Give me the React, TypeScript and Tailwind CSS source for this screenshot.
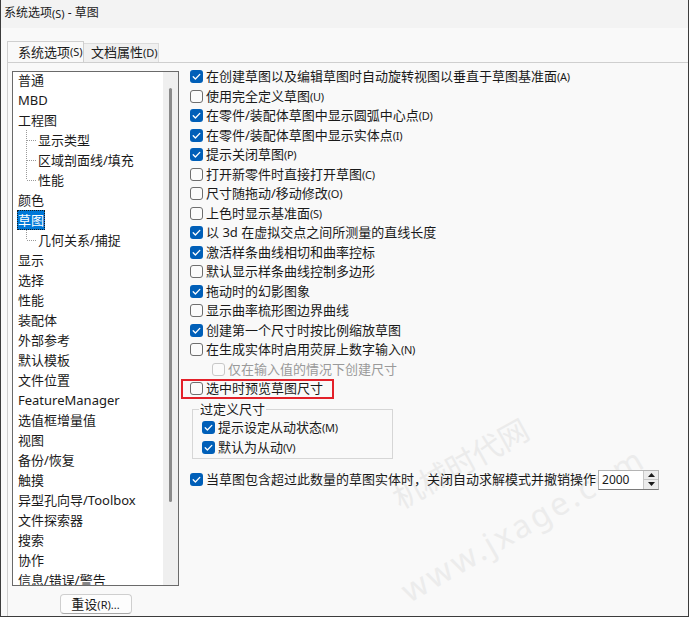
import React from 'react';

type Opt = { t: string; k?: string; c: boolean };

const opts: Opt[] = [
  { t: '在创建草图以及编辑草图时自动旋转视图以垂直于草图基准面', k: '(A)', c: true },
  { t: '使用完全定义草图', k: '(U)', c: false },
  { t: '在零件/装配体草图中显示圆弧中心点', k: '(D)', c: true },
  { t: '在零件/装配体草图中显示实体点', k: '(I)', c: true },
  { t: '提示关闭草图', k: '(P)', c: true },
  { t: '打开新零件时直接打开草图', k: '(C)', c: false },
  { t: '尺寸随拖动/移动修改', k: '(O)', c: false },
  { t: '上色时显示基准面', k: '(S)', c: false },
  { t: '以 3d 在虚拟交点之间所测量的直线长度', c: true },
  { t: '激活样条曲线相切和曲率控标', c: true },
  { t: '默认显示样条曲线控制多边形', c: false },
  { t: '拖动时的幻影图象', c: true },
  { t: '显示曲率梳形图边界曲线', c: false },
  { t: '创建第一个尺寸时按比例缩放草图', c: true },
  { t: '在生成实体时启用荧屏上数字输入', k: '(N)', c: false },
];

// level 0 = top, 1 = child, last = last child of a group
type Node = { t: string; lv: 0 | 1; last?: boolean; sel?: boolean };

const tree: Node[] = [
  { t: '普通', lv: 0 },
  { t: 'MBD', lv: 0 },
  { t: '工程图', lv: 0 },
  { t: '显示类型', lv: 1 },
  { t: '区域剖面线/填充', lv: 1 },
  { t: '性能', lv: 1, last: true },
  { t: '颜色', lv: 0 },
  { t: '草图', lv: 0, sel: true },
  { t: '几何关系/捕捉', lv: 1, last: true },
  { t: '显示', lv: 0 },
  { t: '选择', lv: 0 },
  { t: '性能', lv: 0 },
  { t: '装配体', lv: 0 },
  { t: '外部参考', lv: 0 },
  { t: '默认模板', lv: 0 },
  { t: '文件位置', lv: 0 },
  { t: 'FeatureManager', lv: 0 },
  { t: '选值框增量值', lv: 0 },
  { t: '视图', lv: 0 },
  { t: '备份/恢复', lv: 0 },
  { t: '触摸', lv: 0 },
  { t: '异型孔向导/Toolbox', lv: 0 },
  { t: '文件探索器', lv: 0 },
  { t: '搜索', lv: 0 },
  { t: '协作', lv: 0 },
  { t: '信息/错误/警告', lv: 0 },
];

const Box: React.FC<{ on: boolean; off?: boolean }> = ({ on, off }) =>
  on ? (
    <span className="w-[13px] h-[13px] shrink-0 rounded-[3px] bg-[#005fb8] flex items-center justify-center">
      <svg width="13" height="13" viewBox="0 0 13 13">
        <path d="M3.2 6.8 L5.4 9 L9.8 4.4" fill="none" stroke="#fff" strokeWidth="1.3" strokeLinecap="round" strokeLinejoin="round" />
      </svg>
    </span>
  ) : (
    <span
      className={
        off
          ? 'w-[13px] h-[13px] shrink-0 rounded-[3px] border border-[#c8c8c8] bg-[#fbfbfb]'
          : 'w-[13px] h-[13px] shrink-0 rounded-[3px] border border-[#6e6e6e] bg-[#fbfbfb]'
      }
    />
  );

const Key: React.FC<{ k?: string }> = ({ k }) =>
  k ? <span className="text-[11px] tracking-[-0.3px]">{k}</span> : null;

const Row: React.FC<{ o: Opt }> = ({ o }) => (
  <div className="h-[19.5px] flex items-center gap-[3px] text-[13px] text-[#1a1a1a] whitespace-nowrap">
    <Box on={o.c} />
    <span>
      {o.t}
      <Key k={o.k} />
    </span>
  </div>
);

const Branch: React.FC<{ last?: boolean }> = ({ last }) => (
  <svg width="12" height="20" className="shrink-0">
    <line x1="0.5" y1="0" x2="0.5" y2={last ? 10 : 20} stroke="#9a9a9a" strokeDasharray="1 1" />
    <line x1="1" y1="10.5" x2="10" y2="10.5" stroke="#9a9a9a" strokeDasharray="1 1" />
  </svg>
);

export default function App() {
  return (
    <div className="w-[689px] h-[617px] bg-[#f9f9f9] border-l border-r border-b border-[#3c3c3c] overflow-hidden relative font-['Noto_Sans','Noto_Sans_CJK_SC',sans-serif] text-[#1a1a1a] flex flex-col">
      {/* watermark, faint, behind the controls */}
      <div className="absolute left-[384px] top-[441px] text-[30px] leading-[43px] text-[#ebebeb] rotate-[-29deg] pointer-events-none whitespace-nowrap font-['Noto_Sans_CJK_SC',sans-serif]">
        机械时代网
      </div>
      <div className="absolute left-[384px] top-[502px] text-[32px] leading-[44px] text-[#ececec] rotate-[-30deg] pointer-events-none whitespace-nowrap tracking-[3px]">
        www.jxage.com
      </div>

      {/* title */}
      <div className="h-[28px] shrink-0 bg-[#f3f3f3] flex items-center pl-[3px] pb-[2px] text-[12px] leading-none relative">
        系统选项<span className="text-[11px]">(S)</span>&nbsp;-&nbsp;草图
      </div>

      {/* tabs */}
      <div className="h-[34px] shrink-0 flex items-end pl-[6px] relative">
        <div className="h-[22px] w-[77px] border border-b-0 border-[#cfcfcf] bg-[#f9f9f9] flex items-center pl-[10px] text-[13px] relative top-[1px]">
          系统选项<span className="text-[11px]">(S)</span>
        </div>
        <div className="h-[19px] w-[75px] border border-l-0 border-b-0 border-[#dcdcdc] bg-[#f0f0f0] flex items-center pl-[7px] text-[13px]">
          文档属性<span className="text-[11px]">(D)</span>
        </div>
      </div>

      {/* panel */}
      <div className="flex-1 ml-[6px] border-t border-l border-[#cfcfcf] flex pl-[4px] gap-[11px] relative">
        {/* tree column */}
        <div className="w-[167px] shrink-0 pt-[8px] flex flex-col items-center">
          <div className="w-[167px] h-[515px] border border-[#6a6a6a] bg-white flex">
            <div className="flex-1 overflow-hidden text-[13px] leading-[20px]">
              <div className="-mt-[2px]">
                {tree.map((n, i) =>
                  n.lv === 0 ? (
                    <div key={i} className="h-[20px] flex items-center pl-[4px] whitespace-nowrap">
                      {n.sel ? (
                        <span className="h-[20px] px-[1px] bg-[#0078d7] text-white outline outline-1 outline-dotted outline-[#1a1a1a] -outline-offset-1">
                          {n.t}
                        </span>
                      ) : (
                        <span className="pl-[1px]">{n.t}</span>
                      )}
                    </div>
                  ) : (
                    <div key={i} className="h-[20px] flex items-center pl-[13px] whitespace-nowrap">
                      <Branch last={n.last} />
                      <span>{n.t}</span>
                    </div>
                  )
                )}
              </div>
            </div>
            <div className="w-[15px] shrink-0 bg-[#efefef] flex justify-center">
              <div className="mt-[16px] h-[414px] w-[3px] rounded-full bg-[#8a8a8a]" />
            </div>
          </div>
          <button className="mt-[8px] h-[20px] w-[72px] rounded-[4px] border border-[#cfcfcf] border-b-[#a8a8a8] bg-[#fdfdfd] text-[13px] leading-none flex items-center justify-center">
            重设<span className="text-[11px]">(R)...</span>
          </button>
        </div>

        {/* options column */}
        <div className="flex-1 pt-[4px] flex flex-col">
          {opts.map((o, i) => (
            <Row key={i} o={o} />
          ))}
          <div className="h-[19.5px] flex items-center gap-[3px] pl-[22px] text-[13px] text-[#9a9a9a] whitespace-nowrap">
            <Box on={false} off />
            <span>仅在输入值的情况下创建尺寸</span>
          </div>
          <div className="h-[19.5px] flex items-center gap-[3px] text-[13px] whitespace-nowrap relative">
            <Box on={false} />
            <span>选中时预览草图尺寸</span>
            <div className="absolute left-[-9px] top-0 w-[153px] h-[20px] border-2 border-[#e3212a] pointer-events-none" />
          </div>

          <fieldset className="mt-[2px] ml-[2px] w-[201px] border border-[#d6d6d6] pl-[6px]">
            <legend className="text-[13px] leading-[17px] px-[1px]">过定义尺寸</legend>
            <div className="pl-[3px]">
              <div className="h-[20px] flex items-center gap-[3px] text-[13px] whitespace-nowrap">
                <Box on />
                <span>
                  提示设定从动状态<Key k="(M)" />
                </span>
              </div>
              <div className="h-[20px] flex items-center gap-[3px] text-[13px] whitespace-nowrap">
                <Box on />
                <span>
                  默认为从动<Key k="(V)" />
                </span>
              </div>
            </div>
          </fieldset>

          <div className="mt-[11px] h-[20px] flex items-center gap-[3px] text-[13px] whitespace-nowrap">
            <Box on />
            <span>当草图包含超过此数量的草图实体时，关闭自动求解模式并撤销操作</span>
            <div className="ml-[-1px] h-[20px] w-[61px] border border-[#b4b4b4] border-b-[#7a7a7a] bg-white flex items-center">
              <span className="flex-1 pl-[3px] text-[12px] leading-none">2000</span>
              <div className="w-[15px] h-[18px] flex flex-col border-l border-[#c8c8c8] bg-[#ececec]">
                <div className="flex-1 flex items-center justify-center border-b border-[#c8c8c8]">
                  <svg width="7" height="4" viewBox="0 0 7 4"><path d="M3.5 0 L7 4 L0 4 Z" fill="#1a1a1a" /></svg>
                </div>
                <div className="flex-1 flex items-center justify-center">
                  <svg width="7" height="4" viewBox="0 0 7 4"><path d="M0 0 L7 0 L3.5 4 Z" fill="#1a1a1a" /></svg>
                </div>
              </div>
            </div>
          </div>
        </div>
      </div>
    </div>
  );
}
